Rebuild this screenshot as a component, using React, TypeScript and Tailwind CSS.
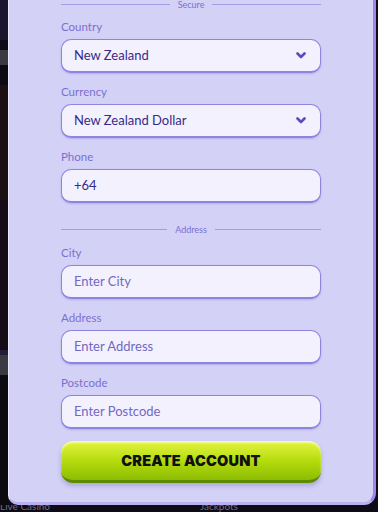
type Field = {
  label: string;
  value?: string;
  placeholder?: string;
  select?: boolean;
};

const secure: Field[] = [
  { label: "Country", value: "New Zealand", select: true },
  { label: "Currency", value: "New Zealand Dollar", select: true },
  { label: "Phone", value: "+64" },
];

const address: Field[] = [
  { label: "City", placeholder: "Enter City" },
  { label: "Address", placeholder: "Enter Address" },
  { label: "Postcode", placeholder: "Enter Postcode" },
];

function Divider({ text }: { text: string }) {
  return (
    <div className="flex items-center gap-[8px] h-[9px]">
      <div className="flex-1 h-px bg-[#a59ce6]" />
      <span className="text-[9px] leading-[9px] text-[#7a70cf]">{text}</span>
      <div className="flex-1 h-px bg-[#a59ce6]" />
    </div>
  );
}

function FormField({ field }: { field: Field }) {
  return (
    <div className="flex flex-col gap-[5px]">
      <label className="text-[11.5px] leading-[14px] text-[#7a70cf]">{field.label}</label>
      <div className="h-[34px] flex items-center justify-between rounded-[10px] border border-b-2 border-[#8e83df] bg-[#f3f1fe] pl-[12px] pr-[14px] shadow-[0_1px_2px_rgba(90,70,200,0.25)]">
        {field.value ? (
          <span className="text-[13px] text-[#36298a]">{field.value}</span>
        ) : (
          <span className="text-[13px] text-[#7168c4]">{field.placeholder}</span>
        )}
        {field.select && (
          <svg width="10" height="7" viewBox="0 0 10 7" fill="none">
            <path d="M1.5 1.5 L5 5 L8.5 1.5" stroke="#5a4bc2" strokeWidth="2.6" strokeLinecap="round" strokeLinejoin="round" />
          </svg>
        )}
      </div>
    </div>
  );
}

export default function App() {
  return (
    <div className="w-[378px] h-[512px] overflow-hidden bg-[#0e0a16] font-['Lato',sans-serif] flex flex-col">
      <div className="flex h-[505px]">
        {/* background strip behind the modal */}
        <div className="w-[8px] flex flex-col">
          <div className="h-[40px] bg-[#1a1630]" />
          <div className="h-[10px] bg-[#0e0b18]" />
          <div className="h-[15px] bg-[#3b3a43]" />
          <div className="h-[20px] bg-[#0d0a13]" />
          <div className="h-[115px] bg-[#1c1013]" />
          <div className="h-[150px] bg-[#150c17]" />
          <div className="h-[5px] bg-[#241d3a]" />
          <div className="h-[20px] bg-[#3a3a42]" />
          <div className="flex-1 bg-[#0c0910]" />
        </div>

        {/* modal */}
        <div className="w-[368px] bg-[#d4d1f7] border-l border-l-[#ebe9ff] border-r-[3px] border-r-[#9a87e6] border-b-[3px] border-b-[#b9b0f0] rounded-bl-[10px] rounded-br-[12px] px-[52px] flex flex-col">
          <Divider text="Secure" />
          <div className="flex flex-col gap-[12px] mt-[11px]">
            {secure.map((f) => (
              <FormField key={f.label} field={f} />
            ))}
          </div>
          <div className="mt-[22px]">
            <Divider text="Address" />
          </div>
          <div className="flex flex-col gap-[12px] mt-[12px]">
            {address.map((f) => (
              <FormField key={f.label} field={f} />
            ))}
          </div>
          <button className="mt-[12px] h-[42px] rounded-[12px] bg-gradient-to-b from-[#e4f53a] via-[#b5dc0c] to-[#8cbd03] border-b-[3px] border-[#5d8a00] shadow-[inset_0_2px_2px_rgba(255,255,255,0.6),0_3px_4px_rgba(60,50,130,0.25)] font-['Inter',sans-serif] text-[14.5px] font-black tracking-[0.2px] text-[#111111]">
            CREATE ACCOUNT
          </button>
        </div>
      </div>

      {/* footer nav cut off below */}
      <div className="h-[7px] overflow-hidden flex text-[10px] leading-[10px] text-[#6e6c80]">
        <span className="-mt-[4px] w-[200px]">Live Casino</span>
        <span className="-mt-[4px]">Jackpots</span>
      </div>
    </div>
  );
}
